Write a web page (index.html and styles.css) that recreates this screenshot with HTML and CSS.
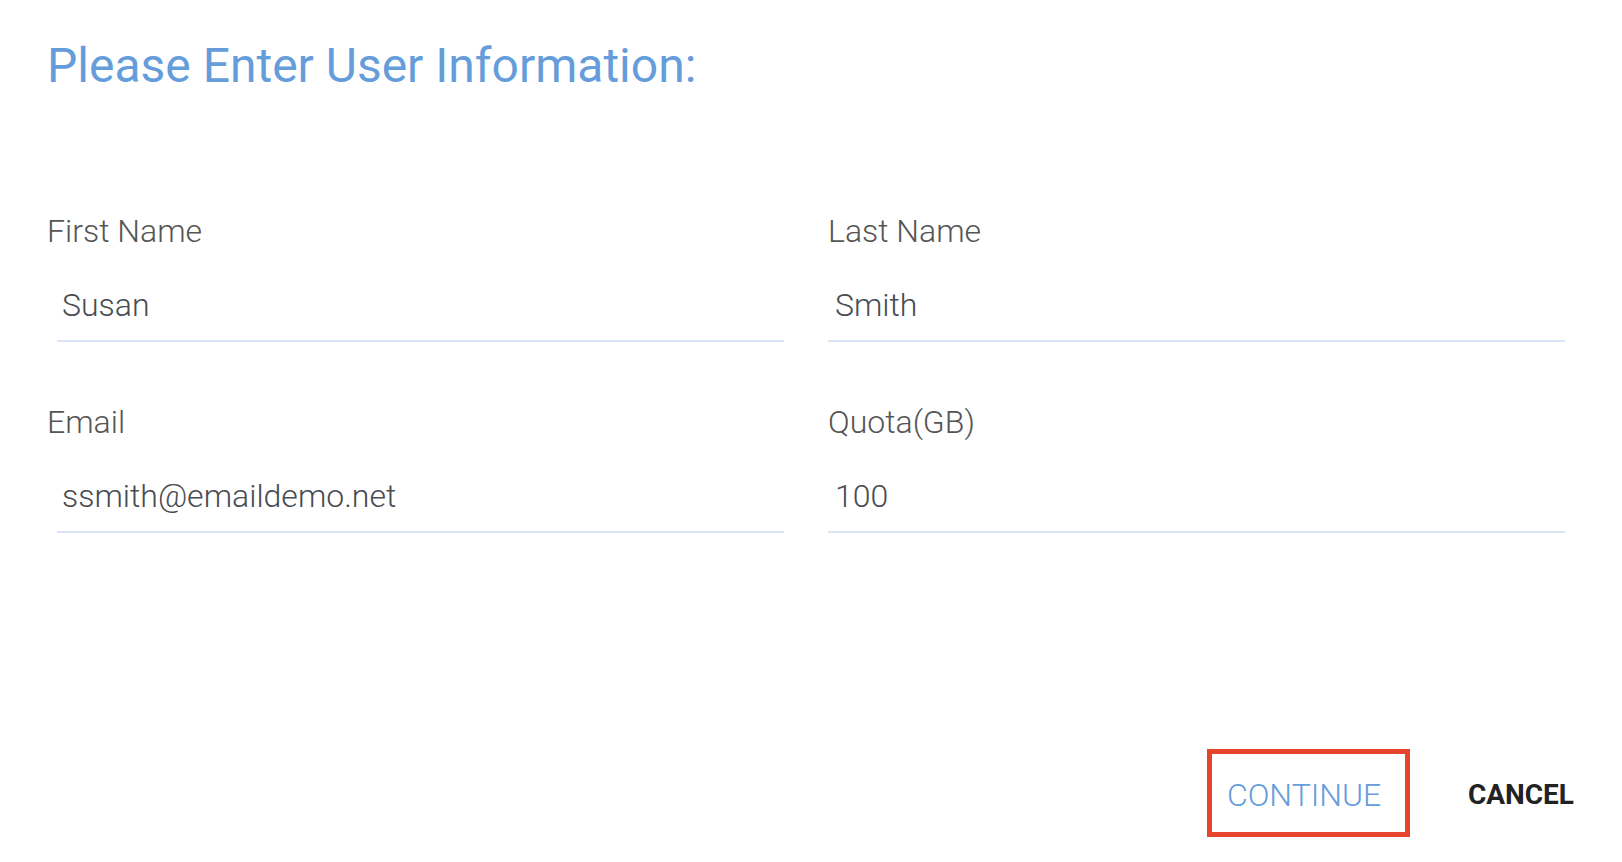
FILE: index.html
```html
<!DOCTYPE html>
<html lang="en">
<head>
<meta charset="utf-8">
<title>Please Enter User Information</title>
<link rel="stylesheet" href="styles.css">
</head>
<body>
<div class="dialog">
  <h1 class="title">Please Enter User Information:</h1>
  <form class="form">
    <div class="field">
      <label class="label">First Name</label>
      <div class="input input--left">Susan</div>
    </div>
    <div class="field">
      <label class="label">Last Name</label>
      <div class="input">Smith</div>
    </div>
    <div class="field">
      <label class="label">Email</label>
      <div class="input input--left">ssmith@emaildemo.net</div>
    </div>
    <div class="field">
      <label class="label">Quota(GB)</label>
      <div class="input">100</div>
    </div>
  </form>
  <div class="actions">
    <button class="btn btn-continue" type="button">CONTINUE</button>
    <button class="btn btn-cancel" type="button">CANCEL</button>
  </div>
</div>
</body>
</html>
```
FILE: styles.css
```css
html, body {
  margin: 0;
  padding: 0;
  background: #ffffff;
}

body {
  font-family: Roboto, "Liberation Sans", sans-serif;
  width: 1622px;
  height: 862px;
  overflow: hidden;
}

.dialog {
  padding: 36px 57px 0 47px;
}

.title {
  margin: 0;
  font-size: 48px;
  line-height: 60px;
  font-weight: 400;
  color: #659ddb;
}

.form {
  margin-top: 116px;
  display: grid;
  grid-template-columns: 1fr 1fr;
  column-gap: 44px;
  row-gap: 61px;
}

.field {
  display: flex;
  flex-direction: column;
}

.label {
  font-size: 32px;
  line-height: 38px;
  font-weight: 300;
  color: #555555;
}

.input {
  margin-top: 36px;
  font-size: 32px;
  line-height: 38px;
  font-weight: 300;
  color: #474c52;
  padding: 0 0 16px 7px;
  border-bottom: 2px solid #d8e5f4;
}

.input--left {
  margin-left: 10px;
  padding-left: 5px;
}

.actions {
  margin-top: 216px;
  display: flex;
  justify-content: flex-end;
  align-items: center;
}

.btn {
  font-family: Roboto, "Liberation Sans", sans-serif;
  background: transparent;
  border: none;
  cursor: pointer;
  margin: 0;
}

.btn-continue {
  box-sizing: border-box;
  width: 203px;
  height: 88px;
  border: 5px solid #e5452c;
  padding: 3px 0 0 15px;
  text-align: left;
  font-size: 32px;
  font-weight: 300;
  color: #659ddb;
}

.btn-cancel {
  margin-left: 58px;
  margin-right: -9px;
  padding: 2px 0 0 0;
  font-size: 28px;
  font-weight: 700;
  color: #222222;
}
```
